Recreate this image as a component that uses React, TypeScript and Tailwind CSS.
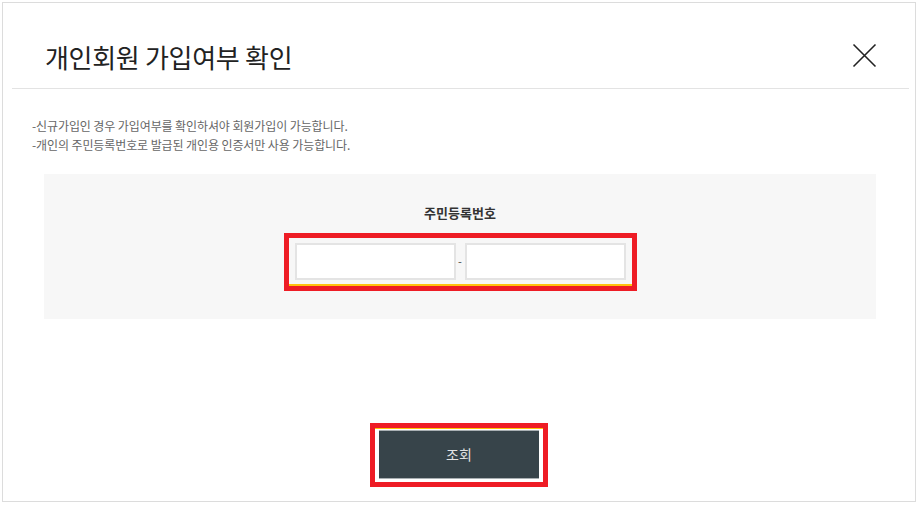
import React from "react";

export default function App() {
  return (
    <div className="w-[921px] h-[506px] bg-white pt-[2px] pl-[2px]" style={{ fontFamily: '"Noto Sans CJK KR", "Noto Sans", sans-serif' }}>
      <div className="w-[914px] h-[500px] border border-[#dcdcdc] flex flex-col">
        <div className="ml-[9px] mr-[6px] h-[86px] border-b border-[#e3e3e3] flex items-start justify-between pl-[33px] pr-[32px] pt-[39px]">
          <h1 className="text-[26px] leading-[30px] font-normal text-[#222] tracking-[-0.3px]">개인회원 가입여부 확인</h1>
          <svg width="25" height="25" viewBox="0 0 25 25" className="mt-[1px]">
            <path d="M1.5 1.5 L23.5 23.5 M23.5 1.5 L1.5 23.5" stroke="#222" strokeWidth="1.6" fill="none" />
          </svg>
        </div>
        <div className="pl-[29px] pt-[27px] text-[12px] leading-[19px] text-[#666] tracking-[-0.1px]">
          <p>-신규가입인 경우 가입여부를 확인하셔야 회원가입이 가능합니다.</p>
          <p>-개인의 주민등록번호로 발급된 개인용 인증서만 사용 가능합니다.</p>
        </div>
        <div className="ml-[41px] mt-[20px] w-[832px] h-[145px] bg-[#f7f7f7] flex flex-col items-center pt-[30px]">
          <div className="text-[13px] leading-[17px] font-bold text-[#333]">주민등록번호</div>
          <div className="mt-[12px] border-[5px] border-[#ee1c25] h-[58px] w-[353px]">
            <div className="h-full border-b-[2px] border-[#ffc20e] flex items-start pl-[6px] pt-[5px]">
              <div className="w-[161px] h-[37px] bg-white border-2 border-[#e4e4e4]" />
              <span className="w-[9px] text-center text-[11px] leading-[37px] text-[#444]">-</span>
              <div className="w-[161px] h-[37px] bg-white border-2 border-[#e4e4e4]" />
            </div>
          </div>
        </div>
        <div className="mt-[104px] flex justify-center">
          <div className="w-[178px] h-[64px] border-[5px] border-[#ee1c25]">
            <div className="h-full border-t border-[#ffc20e] px-[4px] pt-[1px]">
              <button className="w-[160px] h-[49px] bg-[#37444a] border-y border-[#a9b0b3] text-[14px] text-[#e3e3e3]">조회</button>
            </div>
          </div>
        </div>
      </div>
    </div>
  );
}
